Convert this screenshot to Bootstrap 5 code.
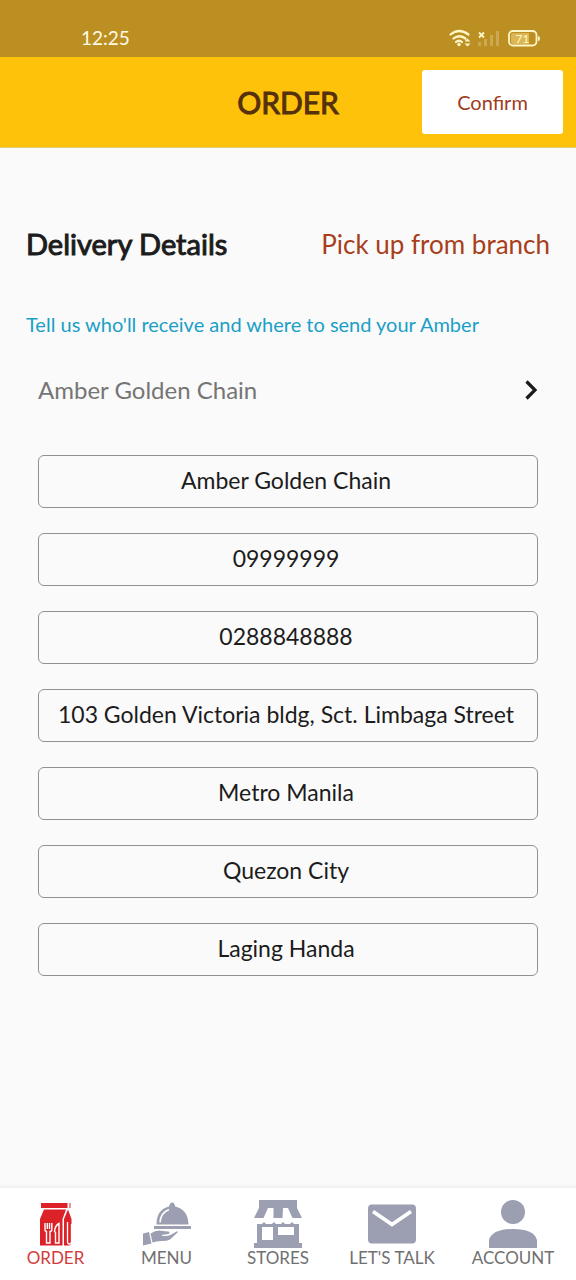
<!DOCTYPE html>
<html lang="en">
<head>
<meta charset="utf-8">
<meta name="viewport" content="width=device-width, initial-scale=1">
<title>Order – Delivery Details</title>
<link href="https://cdn.jsdelivr.net/npm/bootstrap@5.3.0/dist/css/bootstrap.min.css" rel="stylesheet">
<style>
  body { font-family: Lato, "Open Sans", sans-serif; background: #fafafa; color: #1c1c1c; }
  a { text-decoration: none; }
  .status-bar { height: 57px; padding: 20px 36px 0 81px; background: #bc8f23; color: #fffbe6; font-size: 19px; line-height: 36px; }
  .app-header { display: grid; grid-template-columns: 1fr auto 1fr; height: 91px; padding: 0 13px; background: #ffc20a; border-bottom: 1px solid #e3c878; }
  .app-title { font-size: 30px; line-height: 40px; font-weight: 400; color: #54300c; -webkit-text-stroke: 1px #54300c; }
  .btn-confirm { width: 141px; height: 64px; background: #fff; color: #a03c1e; font-size: 20px; border: 0; border-radius: 3px; }
  .btn-confirm:hover { background: #fff3d0; color: #a03c1e; }
  .content { padding: 76px 26px 32px; }
  .section-title { font-size: 29px; line-height: 40px; -webkit-text-stroke: 1px #1c1c1c; }
  .pickup-link { font-size: 26px; line-height: 40px; color: #a83e1b; }
  .hint { margin-top: 44px; font-size: 20px; line-height: 32px; color: #1b9fc6; }
  .recipient { margin: 30px 12px 0; font-size: 24px; line-height: 40px; color: #757575; }
  .fields { gap: 25px; margin: 45px 12px 0; }
  .fields .form-control { height: 53px; padding: 0 16px 3px 12px; border: 1px solid #919191; border-radius: 6px; background: transparent; color: #1c1c1c; font-size: 23px; text-align: center; }
  .tab-bar { display: grid; grid-template-columns: 111fr 111fr 112fr 116fr 126fr; padding: 12px 0; background: #fff; border-top: 1px solid #f0f0f0; box-shadow: 0 -1px 3px #0000000d; }
  .tab-link { color: #707070; font-size: 17px; line-height: 20px; white-space: nowrap; }
  .tab-link.active { color: #d23c3c; }
  .tab-link svg { width: 48px; height: 48px; fill: #9c9fb1; }
  .tab-link.active svg { fill: #dd2128; }
</style>
</head>
<body>
<div class="d-flex flex-column min-vh-100">
  <div class="status-bar d-flex justify-content-between">
    <span>12:25</span>
    <svg width="92" height="36" viewBox="448 20 92 36" aria-hidden="true">
      <g fill="none" stroke="#fff6c8" stroke-width="2.2" stroke-linecap="round">
        <path d="M450.500 34.500Q459 27.500 468.500 34.500M453.500 38.500Q459 34 465.500 38.500M456 42Q459 39.500 462 42"/>
      </g>
      <circle cx="459" cy="44.500" r="1.700" fill="#fff6c8"/>
      <path d="M464.500 41.500l3-3 3 3zM464.500 43.500l3 3 3-3z" fill="#fff6c8"/>
      <path d="M479 32.500l5 5m0-5l-5 5" stroke="#fff6c8" stroke-width="1.800"/>
      <path d="M478 42h3v4h-3zM484 39h3v7h-3zM490 35h3v11h-3zM496 31h3v15h-3z" fill="#cda751"/>
      <rect x="509" y="31" width="27.500" height="14.500" rx="4" fill="#bc8f23" stroke="#fff6c8" stroke-width="1.800"/>
      <path d="M513 33h16v11h-16q-2 0-2-2v-7q0-2 2-2z" fill="#dcb653"/>
      <path d="M538 36q2 0 2 2.500t-2 2.500z" fill="#fff6c8"/>
      <text x="522.500" y="42.500" font-size="12" text-anchor="middle" fill="#fff6c8">71</text>
    </svg>
  </div>

  <header class="app-header align-items-center">
    <span></span>
    <h1 class="app-title m-0">ORDER</h1>
    <button type="button" class="btn btn-confirm ms-auto">Confirm</button>
  </header>

  <main class="content flex-grow-1">
    <div class="d-flex justify-content-between">
      <h2 class="section-title fw-normal m-0">Delivery Details</h2>
      <a href="#" class="pickup-link">Pick up from branch</a>
    </div>
    <p class="hint mb-0">Tell us who'll receive and where to send your Amber</p>
    <a href="#" class="recipient d-flex justify-content-between align-items-center">
      <span>Amber Golden Chain</span>
      <svg width="14" height="20" viewBox="0 0 14 20" fill="none" stroke="#1a1a1a" stroke-width="3.200" aria-hidden="true"><path d="M2.500 1.500L11 10l-8.500 8.500"/></svg>
    </a>
    <form class="fields d-flex flex-column">
      <input class="form-control" type="text" aria-label="Name" value="Amber Golden Chain">
      <input class="form-control" type="tel" aria-label="Mobile number" value="09999999">
      <input class="form-control" type="tel" aria-label="Landline number" value="0288848888">
      <input class="form-control" type="text" aria-label="Street address" value="103 Golden Victoria bldg, Sct. Limbaga Street">
      <input class="form-control" type="text" aria-label="Province" value="Metro Manila">
      <input class="form-control" type="text" aria-label="City" value="Quezon City">
      <input class="form-control" type="text" aria-label="Barangay" value="Laging Handa">
    </form>
  </main>

  <nav class="tab-bar" aria-label="Main">
    <a href="#" class="tab-link active d-flex flex-column align-items-center" aria-current="page">
      <svg viewBox="0 0 48 48" aria-hidden="true">
        <path d="M9 3h26.500v5H9zM37.500 3h1v5h-1zM12 9.500h22L30.500 19v26.500H8V19z"/>
        <path d="M36 9.500l3.500 9.500v23q0 3.500-3 3.500h-4.500V19z"/>
        <path d="M35.500 22v19.500q0 2.500 2 2.500t2-3V24" fill="none" stroke="#fff" stroke-width="1.300"/>
        <g fill="none" stroke="#fff" stroke-width="1.400">
          <path d="M13 23v6.500q0 2 1.500 2v11.500h3.500V31.500q1.800 0 1.800-2V23M15.300 23v6M17.500 23v6"/>
          <path d="M27 23.500q-4 2-4.500 8l1 1v10.500H27z"/>
        </g>
      </svg>
      <span>ORDER</span>
    </a>
    <a href="#" class="tab-link d-flex flex-column align-items-center">
      <svg viewBox="0 0 48 48" aria-hidden="true">
        <path d="M11 26h37v3H11zM13.500 24.500q0-15 12.500-18Q27 2.500 29.200 2.500t3 4Q45 9.500 45.500 24.500z"/>
        <path d="M17 22.500q.5-9.500 9-13" fill="none" stroke="#fff" stroke-width="1.600"/>
        <path d="M0 33.500l6-1.500 2.500 11.500L0 45.500zM7.500 33.500q7-4.500 12-2.500l6 .5q2 1 0 2.500l-7 1 1 1q5 .5 9-1.500l5-3q2-.5 1 1L27 39.500q-3 1.500-8 1.500-5-.2-9.500 1.500z"/>
      </svg>
      <span>MENU</span>
    </a>
    <a href="#" class="tab-link d-flex flex-column align-items-center">
      <svg viewBox="0 0 48 48" aria-hidden="true">
        <path d="M5 0h38v8l5 10h-9.500L34 8h-5l-.5 10h-9L19.500 8H14L9.500 18H0L5 8z"/>
        <path d="M3 24h5l2-2 2 2h6l2-2 2 2h5l2-2 2 2h5l2-2 2 2h5v19h3v5H0v-5h3zM8 27v13h11V27zM24 27v8h16v-8z" fill-rule="evenodd"/>
      </svg>
      <span>STORES</span>
    </a>
    <a href="#" class="tab-link d-flex flex-column align-items-center">
      <svg viewBox="0 0 48 48" aria-hidden="true">
        <rect y="4.500" width="48" height="39" rx="4"/>
        <path d="M5 11.500L24 24.500 43 11.500" fill="none" stroke="#fff" stroke-width="3.800"/>
      </svg>
      <span>LET'S TALK</span>
    </a>
    <a href="#" class="tab-link d-flex flex-column align-items-center">
      <svg viewBox="0 0 48 48" aria-hidden="true">
        <circle cx="24" cy="12" r="12"/>
        <path d="M0 48V40Q3 29 24 29t24 11v8z"/>
      </svg>
      <span>ACCOUNT</span>
    </a>
  </nav>
</div>
<script src="https://cdn.jsdelivr.net/npm/bootstrap@5.3.0/dist/js/bootstrap.bundle.min.js"></script>
</body>
</html>
